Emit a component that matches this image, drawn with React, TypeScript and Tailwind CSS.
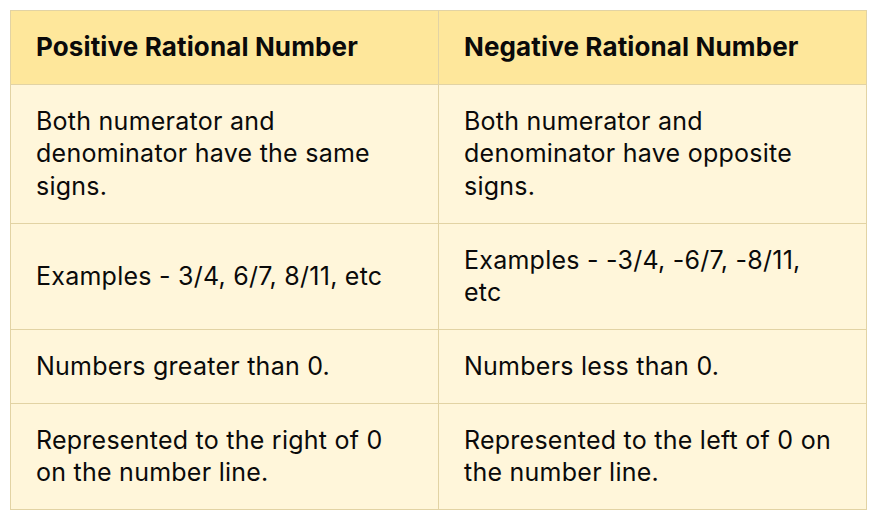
import React from "react";

const rows: [string, string][] = [
  [
    "Both numerator and denominator have the same signs.",
    "Both numerator and denominator have opposite signs.",
  ],
  ["Examples - 3/4, 6/7, 8/11, etc", "Examples - -3/4, -6/7, -8/11, etc"],
  ["Numbers greater than 0.", "Numbers less than 0."],
  [
    "Represented to the right of 0 on the number line.",
    "Represented to the left of 0 on the number line.",
  ],
];

export default function App() {
  return (
    <div className="w-[874px] h-[520px] bg-white p-[10px] font-['Inter',sans-serif] text-[#0a0a0a]">
      <table className="w-[857px] table-fixed border-collapse">
        <thead>
          <tr className="bg-[#fee79b]">
            <th className="w-1/2 border border-[#e2d3a4] pl-[25px] pr-[27px] py-5 text-left text-[26px] leading-[32.67px] tracking-[0.005em] font-bold">
              Positive Rational Number
            </th>
            <th className="w-1/2 border border-[#e2d3a4] pl-[25px] pr-[27px] py-5 text-left text-[26px] leading-[32.67px] tracking-[0.005em] font-bold">
              Negative Rational Number
            </th>
          </tr>
        </thead>
        <tbody>
          {rows.map(([pos, neg], i) => (
            <tr key={i} className="bg-[#fff6da]">
              <td className="border border-[#e2d3a4] pl-[25px] pr-[27px] py-5 align-middle text-[25px] leading-[32.67px] tracking-[0.01em]">
                {pos}
              </td>
              <td className="border border-[#e2d3a4] pl-[25px] pr-[27px] py-5 align-middle text-[25px] leading-[32.67px] tracking-[0.01em]">
                {neg}
              </td>
            </tr>
          ))}
        </tbody>
      </table>
    </div>
  );
}
